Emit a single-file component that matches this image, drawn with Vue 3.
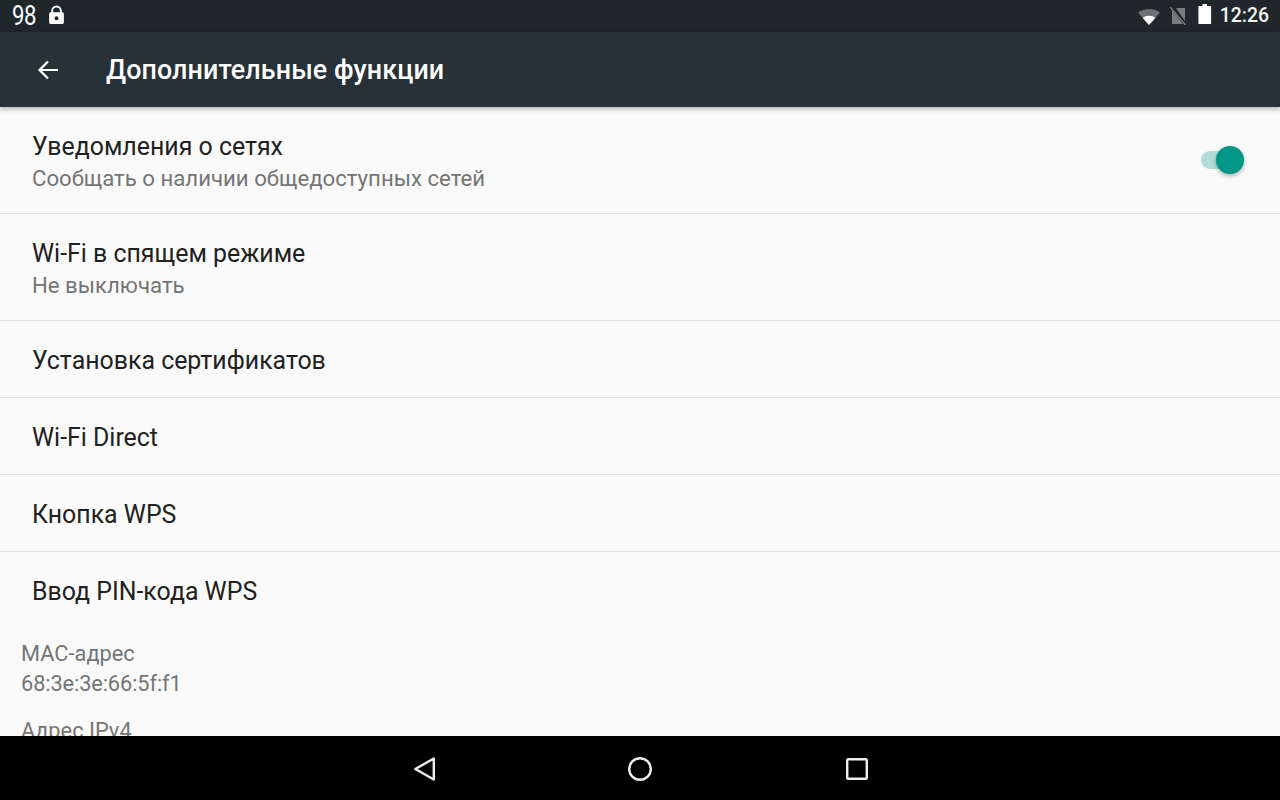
<script setup>
const rows = [
  { title: 'Уведомления о сетях', sub: 'Сообщать о наличии общедоступных сетей', toggle: true },
  { title: 'Wi-Fi в спящем режиме', sub: 'Не выключать' },
  { title: 'Установка сертификатов' },
  { title: 'Wi-Fi Direct' },
  { title: 'Кнопка WPS' },
  { title: 'Ввод PIN-кода WPS' },
]
</script>

<template>
  <div class="screen">
    <div class="status">
      <div class="status-left">
        <span class="num">98</span>
        <svg class="lock" width="17" height="20" viewBox="0 0 16 19"><path fill="#fff" fill-rule="evenodd" d="M3 7V5.500a5 5 0 0 1 10 0V7h.6c.8 0 1.400.6 1.400 1.400v8.200c0 .8-.6 1.400-1.400 1.400H2.400C1.600 18 1 17.400 1 16.600V8.400C1 7.600 1.600 7 2.400 7zM4.800 7h6.400V5.500a3.200 3.200 0 0 0-6.400 0zM8 10.600a1.900 1.900 0 1 0 0 3.800 1.900 1.900 0 0 0 0-3.800z"/></svg>
      </div>
      <div class="status-right">
        <svg class="wifi" width="24" height="16" viewBox="0 0 24 16">
          <path fill="#fff" fill-opacity=".35" d="M1 3.600C4 1.400 7.800 0 12 0s8 1.400 11 3.600L12 16z"/>
          <path fill="#fff" d="M5.700 8.900C7.400 7.600 9.600 6.800 12 6.800s4.600.8 6.300 2.100L12 16z"/>
        </svg>
        <svg class="sim" width="16" height="18" viewBox="0 0 16 18">
          <path fill="#fff" fill-opacity=".4" d="M6 1h9v13zM2 3.500 13 17H3c-.6 0-1-.4-1-1z"/>
          <path stroke="#fff" stroke-opacity=".45" stroke-width="1.200" d="M0 0 15.500 18"/>
        </svg>
        <svg class="battery" width="14" height="20" viewBox="0 0 14 20"><path fill="#fff" d="M4.500 0h4.500v2h3.500c.4 0 .6.300.6.700v16.500c0 .4-.2.800-.6.800H1c-.4 0-.6-.4-.6-.8V2.700c0-.4.200-.7.600-.7h3.500z"/></svg>
        <span class="time">12:26</span>
      </div>
    </div>

    <header class="toolbar">
      <svg class="back" width="24" height="24" viewBox="0 0 24 24"><path fill="none" stroke="#fff" stroke-width="2.200" d="M22 12H3.500M12 3.500 3.500 12l8.500 8.500"/></svg>
      <h1>Дополнительные функции</h1>
    </header>

    <main class="content">
      <div v-for="r in rows" :key="r.title" class="row" :class="{ two: r.sub }">
        <div class="texts">
          <div class="title">{{ r.title }}</div>
          <div v-if="r.sub" class="sub">{{ r.sub }}</div>
        </div>
        <div v-if="r.toggle" class="switch">
          <span class="track"></span>
          <span class="thumb"></span>
        </div>
      </div>
      <div class="info">
        <div class="info-block">
          <div>MAC-адрес</div>
          <div class="mac">68:3e:3e:66:5f:f1</div>
        </div>
        <div class="info-block">
          <div>Адрес IPv4</div>
        </div>
      </div>
    </main>

    <nav class="navbar">
      <svg class="nav-back" width="28" height="28" viewBox="0 0 28 28"><path fill="none" stroke="#eee" stroke-width="2.400" stroke-linejoin="round" d="M22.800 3.500 4.300 14l18.500 10.500z"/></svg>
      <svg class="nav-home" width="28" height="28" viewBox="0 0 28 28"><circle cx="14" cy="14" r="10.800" fill="none" stroke="#eee" stroke-width="2.400"/></svg>
      <svg class="nav-recent" width="24" height="24" viewBox="0 0 24 24"><rect x="2.200" y="2.200" width="19.600" height="19.600" rx="1" fill="none" stroke="#eee" stroke-width="2.400"/></svg>
    </nav>
  </div>
</template>

<style scoped>
.screen {
  width: 1280px;
  height: 800px;
  display: flex;
  flex-direction: column;
  overflow: hidden;
  background: #fafafa;
  font-family: Roboto, "Noto Sans", sans-serif;
}
.status {
  height: 32px;
  flex: none;
  background: #20272b;
  display: flex;
  justify-content: space-between;
  align-items: center;
  color: #fff;
}
.status-left {
  display: flex;
  align-items: center;
  padding-left: 12px;
  gap: 11px;
}
.num {
  font-size: 27px;
  line-height: 32px;
  width: 24px;
  transform: scaleX(0.82);
  transform-origin: left center;
  letter-spacing: -0.5px;
}
.lock { margin-top: -2px; margin-left: 1px; }
.status-right {
  display: flex;
  align-items: center;
  padding-right: 11px;
}
.wifi { margin-top: 1px; }
.sim { margin-left: 9px; }
.battery { margin-left: 12px; margin-top: -4px; }
.time {
  font-size: 19.400px;
  line-height: 32px;
  margin-left: 8px;
  font-weight: 500;
  color: #f4f4f4;
}
.toolbar {
  height: 75px;
  flex: none;
  background: #263238;
  display: flex;
  align-items: center;
  box-shadow: 0 2px 5px rgba(0, 0, 0, 0.3);
  position: relative;
  z-index: 1;
}
.back { margin-left: 36px; }
h1 {
  margin: 1px 0 0 46px;
  font-size: 26.850px;
  font-weight: 500;
  color: #fff;
  letter-spacing: 0.1px;
}
.content {
  flex: 1;
  overflow: hidden;
  min-height: 0;
}
.row {
  height: 76px;
  box-sizing: content-box;
  display: flex;
  align-items: center;
  justify-content: space-between;
  padding-left: 32px;
  border-bottom: 1px solid #e0e0e0;
}
.row.two { height: 106px; }
.row:nth-child(6) { border-bottom: 0; }
.texts { padding-top: 4px; }
.two .texts { padding-top: 5px; }
.title {
  font-size: 24.900px;
  line-height: 32px;
  color: #212121;
}
.sub {
  margin-top: -1px;
  font-size: 22.200px;
  line-height: 32px;
  color: #757575;
}
.switch {
  position: relative;
  width: 44px;
  height: 28px;
  margin-right: 36px;
}
.track {
  position: absolute;
  left: 1px;
  top: 5px;
  width: 34px;
  height: 18px;
  border-radius: 9px;
  background: #b2dcd7;
}
.thumb {
  position: absolute;
  left: 16px;
  top: 0;
  width: 28px;
  height: 28px;
  border-radius: 50%;
  background: #009688;
  box-shadow: 0 2px 4px rgba(0, 0, 0, 0.3);
}
.info {
  padding: 11px 0 0 21px;
  font-size: 21.800px;
  line-height: 30px;
  color: #757575;
}
.mac { letter-spacing: -0.12px; }
.info-block { margin-bottom: 17px; }
.navbar {
  height: 64px;
  flex: none;
  background: #000;
  display: flex;
  padding-left: 411px;
  align-items: center;
}
.nav-back { margin-top: 2px; }
.nav-home { margin: 2px 0 0 187px; }
.nav-recent { margin: 1px 0 0 191px; }
</style>
